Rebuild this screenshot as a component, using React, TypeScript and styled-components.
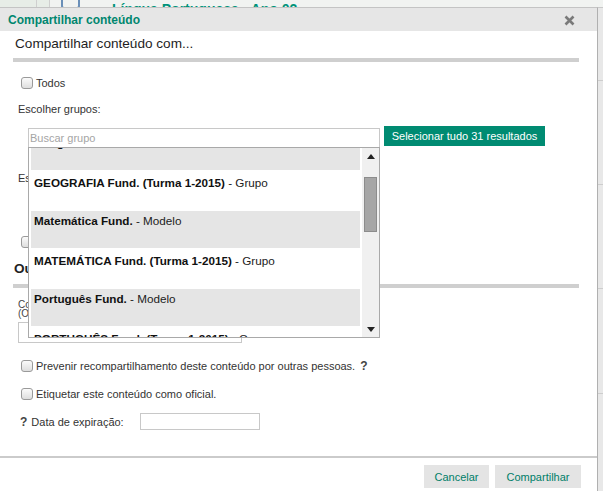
import React from 'react'
import styled, { createGlobalStyle } from 'styled-components'

const GlobalStyle = createGlobalStyle`
  html, body {
    margin: 0;
    padding: 0;
  }
  body {
    font-family: "Liberation Sans", Arial, sans-serif;
    font-size: 11px;
    color: #333;
    background: #ebebeb;
  }
`

interface IGroup {
  name: string
  kind: string
}

const groups: IGroup[] = [
  { name: 'Geografia Fund.', kind: 'Modelo' },
  { name: 'GEOGRAFIA Fund. (Turma 1-2015)', kind: 'Grupo' },
  { name: 'Matemática Fund.', kind: 'Modelo' },
  { name: 'MATEMÁTICA Fund. (Turma 1-2015)', kind: 'Grupo' },
  { name: 'Português Fund.', kind: 'Modelo' },
  { name: 'PORTUGUÊS Fund. (Turma 1-2015)', kind: 'Grupo' },
]

function CloseIcon(): JSX.Element {
  return (
    <svg width="11" height="11" viewBox="0 0 11 11">
      <path d="M1.5 1.5 L9.5 9.5 M9.5 1.5 L1.5 9.5" stroke="#7a7a7a" strokeWidth="2.6" />
    </svg>
  )
}

function Arrow({ dir }: { dir: 'up' | 'down' }): JSX.Element {
  return (
    <svg width="8" height="5" viewBox="0 0 8 5">
      <path d={dir === 'up' ? 'M0 5 L4 0 L8 5 Z' : 'M0 0 L8 0 L4 5 Z'} fill="#222" />
    </svg>
  )
}

export default function App(): JSX.Element {
  return (
    <>
      <GlobalStyle />
      <Style.Page>
        <Style.Backdrop>
          <Style.TopStrip>
            <Style.StripCell $width={36} />
            <Style.StripCell $width={12} />
            <Style.StripIcon />
            <Style.StripTitle>Língua Portuguesa - Ano 02</Style.StripTitle>
          </Style.TopStrip>
          <Style.BackRow $height={72} />
          <Style.BackRow $height={103} />
          <Style.BackRow $height={103} />
          <Style.BackRow $height={104} />
        </Style.Backdrop>

        <Style.Modal>
          <Style.TitleBar>
            <Style.Title>Compartilhar conteúdo</Style.Title>
            <Style.Close>
              <CloseIcon />
            </Style.Close>
          </Style.TitleBar>

          <Style.Body>
            <Style.Heading>Compartilhar conteúdo com...</Style.Heading>
            <Style.Bar />

            <Style.CheckRow $top={14}>
              <Style.Checkbox />
              <span>Todos</span>
            </Style.CheckRow>

            <Style.Label $top={13}>Escolher grupos:</Style.Label>

            <Style.SearchRow>
              <Style.SearchWrap>
                <Style.SearchInput placeholder="Buscar grupo" />
                <Style.Dropdown>
                  <Style.Items>
                    {groups.map((g, i) => (
                      <Style.Item key={g.name} $shaded={i % 2 === 0}>
                        <b>{g.name}</b> - {g.kind}
                      </Style.Item>
                    ))}
                  </Style.Items>
                  <Style.Scrollbar>
                    <Arrow dir="up" />
                    <Style.Thumb />
                    <Style.Spacer />
                    <Arrow dir="down" />
                  </Style.Scrollbar>
                </Style.Dropdown>
              </Style.SearchWrap>
              <Style.SelectAll>Selecionar tudo 31 resultados</Style.SelectAll>
            </Style.SearchRow>

            <Style.Label $top={24}>Escolher usuários:</Style.Label>
            <Style.HiddenInput />
            <Style.CheckRow $top={19}>
              <Style.Checkbox />
              <span>Todos os usuários</span>
            </Style.CheckRow>

            <Style.SubHeading>Outras opções</Style.SubHeading>
            <Style.Bar $top={8} />
            <Style.SmallNote>
              Compartilhar com e-mail
              <br />
              (Opcional)
            </Style.SmallNote>
            <Style.EmailInput />

            <Style.CheckRow $top={16}>
              <Style.Checkbox />
              <span>Prevenir recompartilhamento deste conteúdo por outras pessoas.</span>
              <Style.Help>?</Style.Help>
            </Style.CheckRow>
            <Style.CheckRow $top={15}>
              <Style.Checkbox />
              <span>Etiquetar este conteúdo como oficial.</span>
            </Style.CheckRow>

            <Style.DateRow>
              <Style.Help>?</Style.Help>
              <Style.DateLabel>Data de expiração:</Style.DateLabel>
              <Style.DateInput />
            </Style.DateRow>
          </Style.Body>

          <Style.Footer>
            <Style.Button $width={65}>Cancelar</Style.Button>
            <Style.Button $width={86}>Compartilhar</Style.Button>
          </Style.Footer>
        </Style.Modal>
      </Style.Page>
    </>
  )
}

const Style = {
  Page: styled.div`
    position: relative;
    width: 603px;
    height: 491px;
    overflow: hidden;
    background: #e8e8e8;
  `,
  Backdrop: styled.div`
    display: flex;
    flex-direction: column;
  `,
  TopStrip: styled.div`
    display: flex;
    align-items: flex-end;
    height: 7px;
    background: #f1f3f1;
    border-bottom: 1px solid #c9c9c9;
    overflow: hidden;
  `,
  StripCell: styled.div<{ $width: number }>`
    width: ${({ $width }) => $width}px;
    height: 100%;
    border-right: 1px solid #cfcfcf;
    background: #e7ede7;
  `,
  StripIcon: styled.div`
    width: 15px;
    height: 14px;
    margin: 0 0 -2px 11px;
    border: 2px solid #6a8fb8;
    border-radius: 3px;
    align-self: flex-end;
  `,
  StripTitle: styled.div`
    margin: 0 0 -10px 32px;
    color: #00937a;
    font-size: 14px;
    font-weight: bold;
    white-space: nowrap;
  `,
  BackRow: styled.div<{ $height: number }>`
    height: ${({ $height }) => $height}px;
    border-bottom: 1px solid #cdcdcd;
  `,
  Modal: styled.div`
    position: absolute;
    top: 7px;
    left: 0;
    bottom: 0;
    width: 597px;
    display: flex;
    flex-direction: column;
    background: #fff;
    border-top: 1px solid #c4c4c4;
    border-right: 1px solid #b0b0b0;
  `,
  TitleBar: styled.div`
    display: flex;
    align-items: center;
    justify-content: space-between;
    height: 23px;
    padding: 0 22px 0 8px;
    background: #e6e6e6;
  `,
  Title: styled.div`
    color: #00866f;
    font-size: 12px;
    font-weight: bold;
  `,
  Close: styled.div`
    display: flex;
    margin-top: 1px;
  `,
  Body: styled.div`
    flex: 1;
    display: flex;
    flex-direction: column;
    padding: 0 18px 0 13px;
  `,
  Heading: styled.div`
    margin-top: 6px;
    padding-left: 2px;
    font-size: 13.6px;
    line-height: 14px;
    color: #1e1e1e;
  `,
  Bar: styled.div<{ $top?: number }>`
    margin-top: ${({ $top }) => $top ?? 7}px;
    height: 4px;
    background: #cfcfcf;
  `,
  CheckRow: styled.label<{ $top: number }>`
    display: flex;
    align-items: center;
    gap: 3px;
    margin-top: ${({ $top }) => $top}px;
    padding-left: 8px;
    height: 13px;
    color: #333;
  `,
  Checkbox: styled.span`
    width: 10px;
    height: 10px;
    border: 1px solid #9a9a9a;
    border-radius: 3px;
    background: linear-gradient(#fbfbfb, #dedede);
  `,
  Label: styled.div<{ $top: number }>`
    margin-top: ${({ $top }) => $top}px;
    padding-left: 5px;
    line-height: 14px;
  `,
  SearchRow: styled.div`
    display: flex;
    align-items: flex-start;
    gap: 4px;
    margin-top: 12px;
    padding-left: 15px;
    position: relative;
    z-index: 2;
  `,
  SearchWrap: styled.div`
    position: relative;
    width: 352px;
  `,
  SearchInput: styled.input`
    box-sizing: border-box;
    display: block;
    width: 352px;
    height: 19px;
    margin: 0;
    padding: 0 1px;
    border: 1px solid #c8c8c8;
    border-bottom: none;
    font-family: inherit;
    font-size: 11px;
    outline: none;

    &::placeholder {
      color: #a5a5a5;
    }
  `,
  Dropdown: styled.div`
    position: absolute;
    top: 19px;
    left: 0;
    width: 352px;
    height: 191px;
    box-sizing: border-box;
    display: flex;
    border: 1px solid #a9a9a9;
    background: #fff;
    overflow: hidden;
  `,
  Items: styled.div`
    flex: 1;
    display: flex;
    flex-direction: column;
    margin-top: -15px;
    padding: 0 2px 0 2px;
  `,
  Item: styled.div<{ $shaded: boolean }>`
    flex: none;
    box-sizing: border-box;
    height: ${({ $shaded }) => ($shaded ? 37 : 41)}px;
    padding: ${({ $shaded }) => ($shaded ? 3 : 6)}px 3px 0;
    background: ${({ $shaded }) => ($shaded ? '#e5e5e5' : '#fff')};
    font-size: 11.7px;
    line-height: 14px;
    color: #222;
    white-space: nowrap;

    b {
      color: #111;
    }
  `,
  Scrollbar: styled.div`
    width: 17px;
    display: flex;
    flex-direction: column;
    align-items: center;
    padding: 6px 0 5px;
    box-sizing: border-box;
    background: #f0f0f0;
  `,
  Thumb: styled.div`
    width: 11px;
    height: 53px;
    margin-top: 18px;
    border: 1px solid #8c8c8c;
    background: #a6a6a6;
  `,
  Spacer: styled.div`
    flex: 1;
  `,
  SelectAll: styled.div`
    height: 20px;
    width: 161px;
    margin-top: -2px;
    display: flex;
    align-items: center;
    justify-content: center;
    background: #008b72;
    color: #fff;
    font-size: 11px;
  `,
  HiddenInput: styled.div`
    margin: 10px 0 0 15px;
    width: 330px;
    height: 19px;
    border: 1px solid #c8c8c8;
  `,
  SubHeading: styled.div`
    margin-top: 14px;
    padding-left: 1px;
    font-size: 13.6px;
    font-weight: bold;
    line-height: 14px;
    color: #222;
  `,
  SmallNote: styled.div`
    margin-top: 12px;
    padding-left: 5px;
    font-size: 10px;
    line-height: 9px;
    color: #444;
  `,
  EmailInput: styled.div`
    margin: 4px 0 0 5px;
    width: 222px;
    height: 19px;
    border: 1px solid #c8c8c8;
  `,
  Help: styled.span`
    margin-left: 2px;
    font-weight: bold;
    font-size: 12px;
    color: #444;
  `,
  DateRow: styled.div`
    display: flex;
    align-items: center;
    margin-top: 13px;
    padding-left: 5px;
    height: 17px;
  `,
  DateLabel: styled.span`
    width: 109px;
    margin-left: 4px;
  `,
  DateInput: styled.div`
    box-sizing: border-box;
    width: 120px;
    height: 17px;
    border: 1px solid #c8c8c8;
  `,
  Footer: styled.div`
    display: flex;
    justify-content: flex-end;
    gap: 6px;
    height: 35px;
    padding: 7px 16px 0 0;
    box-sizing: border-box;
    border-top: 2px solid #cbcbcb;
  `,
  Button: styled.div<{ $width: number }>`
    width: ${({ $width }) => $width}px;
    height: 23px;
    display: flex;
    align-items: center;
    justify-content: center;
    background: #e4e4e4;
    color: #007e68;
    font-size: 11px;
  `,
}
